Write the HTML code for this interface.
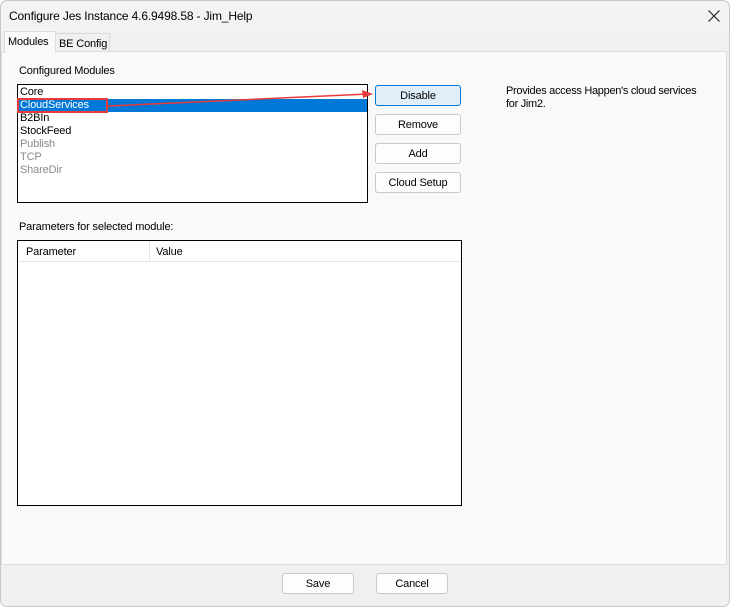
<!DOCTYPE html>
<html><head><style>
*{margin:0;padding:0;box-sizing:border-box}
body{width:731px;height:607px;background:#fff;font-family:"Liberation Sans",sans-serif;font-size:11px;color:#000;position:relative;overflow:hidden;letter-spacing:-0.15px}
.win{position:absolute;left:0;top:0;width:730px;height:607px;background:#f0f0f0;border-radius:7px;overflow:hidden}
.frame{position:absolute;left:0;top:0;width:730px;height:607px;border:1px solid #c8c8c8;border-radius:7px}
.title{position:absolute;left:0;top:0;width:100%;height:31px;background:#f3f3f3}
.title span{position:absolute;left:9px;top:9px;font-size:12px}
.x{position:absolute;left:706px;top:8px;width:16px;height:16px}
.a{position:absolute}
.panel{position:absolute;left:1px;top:51px;width:726px;height:514px;background:#f9f9f9;border:1px solid #dcdcdc}
.btn{position:absolute;background:#fdfdfd;border:1px solid #c9c9c9;border-radius:3px;text-align:center;font-size:11px;line-height:20px}
.list{position:absolute;left:17px;top:84px;width:351px;height:119px;background:#fff;border:1px solid #000;padding-top:1px}
.list div{height:13px;line-height:13px;padding-left:2px;font-size:11px}
</style></head><body>
<div class="win">
<div class="title"><span>Configure Jes Instance 4.6.9498.58 - Jim_Help</span>
<svg class="x" viewBox="0 0 16 16"><path d="M2.5 2.5L13.5 13.5M13.5 2.5L2.5 13.5" stroke="#222" stroke-width="1.2"/></svg></div>
<div class="a" style="left:55px;top:33px;width:55px;height:19px;background:#f0f0f0;border:1px solid #d9d9d9;border-bottom:none"></div>
<div class="a" style="left:59px;top:38px">BE Config</div>
<div class="panel"></div>
<div class="a" style="left:4px;top:31px;width:52px;height:22px;background:#f9f9f9;border:1px solid #dcdcdc;border-bottom:none"></div>
<div class="a" style="left:8px;top:36px">Modules</div>
<div class="a" style="left:19px;top:65px">Configured Modules</div>
<div class="list">
<div>Core</div>
<div style="background:#0078d7;color:#fff">CloudServices</div>
<div>B2BIn</div>
<div>StockFeed</div>
<div style="color:#8a8a8a">Publish</div>
<div style="color:#8a8a8a">TCP</div>
<div style="color:#8a8a8a">ShareDir</div>
</div>
<div class="a" style="left:17px;top:98px;width:91px;height:15px;border:2px solid #e8393b"></div>
<svg class="a" style="left:100px;top:86px" width="280" height="26"><path d="M8 20L268 8" stroke="#e8393b" stroke-width="1.5"/><path d="M273 8L262 4L263 12Z" fill="#e8393b"/></svg>
<div class="btn" style="left:375px;top:85px;width:86px;height:21px;background:#e0eef9;border-color:#0078d4">Disable</div>
<div class="btn" style="left:375px;top:114px;width:86px;height:21px">Remove</div>
<div class="btn" style="left:375px;top:143px;width:86px;height:21px">Add</div>
<div class="btn" style="left:375px;top:172px;width:86px;height:21px">Cloud Setup</div>
<div class="a" style="left:506px;top:85px;line-height:13px;letter-spacing:-0.3px">Provides access Happen's cloud services<br>for Jim2.</div>
<div class="a" style="left:19px;top:221px">Parameters for selected module:</div>
<div class="a" style="left:17px;top:240px;width:445px;height:266px;background:#fff;border:1px solid #000">
<div class="a" style="left:0;top:0;width:443px;height:21px;border-bottom:1px solid #e5e5e5"></div>
<div class="a" style="left:131px;top:0;width:1px;height:21px;background:#e5e5e5"></div>
<div class="a" style="left:8px;top:5px">Parameter</div>
<div class="a" style="left:138px;top:5px">Value</div>
</div>
<div class="btn" style="left:282px;top:573px;width:72px;height:21px">Save</div>
<div class="btn" style="left:376px;top:573px;width:72px;height:21px">Cancel</div>
</div>
<div class="frame"></div>
</body></html>
